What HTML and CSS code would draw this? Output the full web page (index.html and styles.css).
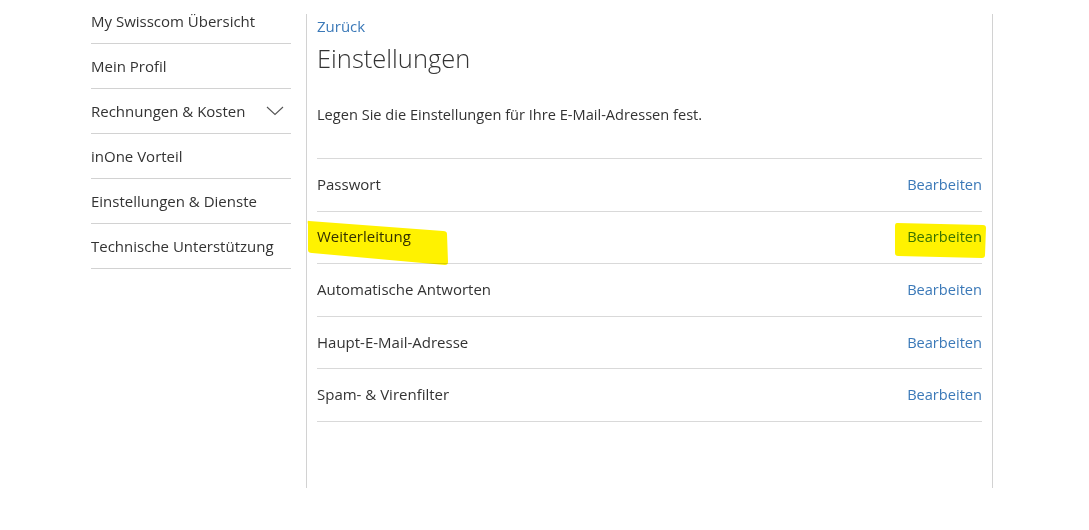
FILE: index.html
```html
<!DOCTYPE html>
<html lang="de">
<head>
<meta charset="utf-8">
<title>Einstellungen</title>
<link rel="stylesheet" href="styles.css">
</head>
<body>
<div class="page">
  <nav class="sidebar">
    <a class="nav-item">My Swisscom Übersicht</a>
    <a class="nav-item">Mein Profil</a>
    <a class="nav-item">Rechnungen &amp; Kosten
      <svg class="chevron" width="18" height="10" viewBox="0 0 18 10"><path d="M1 1 L9 8.5 L17 1" fill="none" stroke="#555" stroke-width="1.1"/></svg>
    </a>
    <a class="nav-item">inOne Vorteil</a>
    <a class="nav-item">Einstellungen &amp; Dienste</a>
    <a class="nav-item">Technische Unterstützung</a>
  </nav>
  <main class="main">
    <a class="back">Zurück</a>
    <h1 class="title">Einstellungen</h1>
    <p class="intro">Legen Sie die Einstellungen für Ihre E-Mail-Adressen fest.</p>
    <div class="list">
      <div class="row"><span>Passwort</span><a class="edit">Bearbeiten</a></div>
      <div class="row"><span>Weiterleitung</span><a class="edit">Bearbeiten</a></div>
      <div class="row"><span>Automatische Antworten</span><a class="edit">Bearbeiten</a></div>
      <div class="row"><span>Haupt-E-Mail-Adresse</span><a class="edit">Bearbeiten</a></div>
      <div class="row"><span>Spam- &amp; Virenfilter</span><a class="edit">Bearbeiten</a></div>
    </div>
  </main>
</div>
<svg class="marker" width="1089" height="530" viewBox="0 0 1089 530">
  <path d="M309 221 Q307 220 308 224 L308 250 Q308 253 312 253 L445 265 Q448 265 448 262 L447 234 Q447 231 443 231 Z" fill="#fff200"/>
  <path d="M897 223 L983 225 Q986 225 986 228 L985 255 Q985 258 982 258 L898 256 Q895 256 895 253 L895 226 Q895 223 897 223 Z" fill="#fff200"/>
</svg>
</body>
</html>
```

FILE: styles.css
```css
html, body {
  margin: 0;
  padding: 0;
  background: #fff;
}
body {
  font-family: "Open Sans", "Noto Sans", sans-serif;
  color: #333;
  font-size: 15px;
}
.page {
  display: flex;
  align-items: flex-start;
  padding-left: 91px;
}
.sidebar {
  width: 200px;
  margin-top: -1px;
  display: flex;
  flex-direction: column;
}
.nav-item {
  height: 44px;
  border-bottom: 1px solid #d2d2d2;
  display: flex;
  align-items: center;
  justify-content: space-between;
  padding-right: 7px;
  color: #333;
  font-size: 15px;
}
.main {
  margin-left: 15px;
  margin-top: 14px;
  width: 665px;
  height: 474px;
  border-left: 1px solid #d2d2d2;
  border-right: 1px solid #d2d2d2;
  padding: 0 10px;
}
.back {
  display: block;
  color: #3b79b8;
  font-size: 15px;
  line-height: 24px;
}
.title {
  margin: 0;
  font-weight: 300;
  font-size: 25.5px;
  line-height: 40px;
  color: #333;
}
.intro {
  margin: 24px 0 0;
  line-height: 24px;
  font-size: 14.6px;
}
.list {
  margin-top: 32px;
  border-top: 1px solid #d9d9d9;
}
.row {
  height: 51.6px;
  box-sizing: border-box;
  padding-bottom: 2px;
  border-bottom: 1px solid #d9d9d9;
  display: flex;
  align-items: center;
  justify-content: space-between;
  font-size: 15px;
}
.row {
  height: 52.6px;
}
.edit {
  color: #3b79b8;
  font-size: 14.6px;
}
.marker {
  position: absolute;
  left: 0;
  top: 0;
  mix-blend-mode: multiply;
  pointer-events: none;
}
```
